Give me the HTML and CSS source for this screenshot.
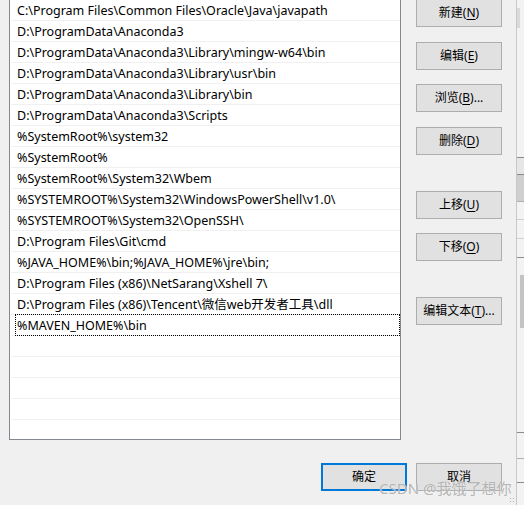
FILE: index.html
```html
<!DOCTYPE html>
<html lang="zh-CN">
<head>
<meta charset="utf-8">
<title>编辑环境变量</title>
<link rel="stylesheet" href="styles.css">
</head>
<body>
<div class="screen">
  <div class="dialog">
    <div class="main">
      <div class="list">
        <div class="row">C:\Program Files\Common Files\Oracle\Java\javapath</div>
        <div class="row">D:\ProgramData\Anaconda3</div>
        <div class="row">D:\ProgramData\Anaconda3\Library\mingw-w64\bin</div>
        <div class="row">D:\ProgramData\Anaconda3\Library\usr\bin</div>
        <div class="row">D:\ProgramData\Anaconda3\Library\bin</div>
        <div class="row">D:\ProgramData\Anaconda3\Scripts</div>
        <div class="row">%SystemRoot%\system32</div>
        <div class="row">%SystemRoot%</div>
        <div class="row">%SystemRoot%\System32\Wbem</div>
        <div class="row">%SYSTEMROOT%\System32\WindowsPowerShell\v1.0\</div>
        <div class="row">%SYSTEMROOT%\System32\OpenSSH\</div>
        <div class="row">D:\Program Files\Git\cmd</div>
        <div class="row">%JAVA_HOME%\bin;%JAVA_HOME%\jre\bin;</div>
        <div class="row">D:\Program Files (x86)\NetSarang\Xshell 7\</div>
        <div class="row">D:\Program Files (x86)\Tencent\微信web开发者工具\dll</div>
        <div class="row focused">%MAVEN_HOME%\bin</div>
        <div class="row"></div>
        <div class="row"></div>
        <div class="row"></div>
        <div class="row"></div>
        <div class="row"></div>
      </div>
      <div class="side">
        <button class="btn b-first">新建(<u>N</u>)</button>
        <button class="btn b-15">编辑(<u>E</u>)</button>
        <button class="btn b-14">浏览(<u>B</u>)...</button>
        <button class="btn b-15">删除(<u>D</u>)</button>
        <button class="btn b-36">上移(<u>U</u>)</button>
        <button class="btn b-14">下移(<u>O</u>)</button>
        <button class="btn b-36">编辑文本(<u>T</u>)...</button>
      </div>
    </div>
    <div class="footer">
      <button class="btn ok">确定</button>
      <button class="btn">取消</button>
    </div>
  </div>
  <div class="backwin">
    <div class="bw-thumb t1"></div>
    <div class="bw-thumb t2"></div>
    <div class="bw-sp s1"></div>
    <div class="bw-line dark"></div>
    <div class="bw-fill f1"></div>
    <div class="bw-line dark"></div>
    <div class="bw-fill f2"></div>
    <div class="bw-line"></div>
    <div class="bw-sp s2"></div>
    <div class="bw-line light"></div>
    <div class="bw-sp s3"></div>
    <div class="bw-line light"></div>
    <div class="bw-sp s4"></div>
    <div class="bw-line dark"></div>
    <div class="bw-sp s5"></div>
    <div class="bw-line dark"></div>
    <div class="bw-sp s6"></div>
    <div class="bw-line"></div>
    <div class="bw-sp s7"></div>
    <div class="bw-line dark"></div>
  </div>
  <div class="watermark">CSDN @我饿了想你</div>
  <div class="grip"></div>
</div>
</body>
</html>
```

FILE: styles.css
```css
html, body {
  margin: 0;
  padding: 0;
}
body {
  background: #f0f0f0;
  font-family: "Noto Sans", "Noto Sans CJK SC", sans-serif;
  font-size: 12.5px;
  color: #000;
}
.screen {
  position: relative;
  width: 524px;
  height: 505px;
  overflow: hidden;
  display: flex;
}
.dialog {
  width: 516px;
  flex: none;
  display: flex;
  flex-direction: column;
}
.main {
  display: flex;
  padding-left: 9px;
  gap: 15px;
}
.list {
  box-sizing: border-box;
  width: 392px;
  height: 440px;
  background: #fff;
  border: 1px solid #828790;
  border-top: none;
  padding-left: 1px;
  overflow: hidden;
}
.row {
  position: relative;
  height: 20px;
  line-height: 21px;
  border-bottom: 1px solid #f0f0f0;
  padding-left: 6px;
  white-space: nowrap;
}
.row.focused::after {
  content: "";
  position: absolute;
  left: 4px;
  right: 0;
  top: -1px;
  bottom: -1px;
  border: 1px dotted #000;
}
.side {
  display: flex;
  flex-direction: column;
  width: 86px;
}
.btn {
  box-sizing: border-box;
  width: 86px;
  height: 28px;
  margin: 0;
  padding: 0;
  border: 1px solid #adadad;
  background: #e1e1e1;
  font-family: "Noto Sans", "Noto Sans CJK SC", sans-serif;
  font-size: 12px;
  color: #000;
  line-height: 24px;
}
.btn u {
  text-underline-offset: 2px;
}
.b-first { margin-top: -1px; }
.b-14 { margin-top: 14px; }
.b-15 { margin-top: 15px; }
.b-36 { margin-top: 36px; }
.footer {
  display: flex;
  justify-content: flex-end;
  gap: 9px;
  padding-right: 14px;
  margin-top: 23px;
}
.btn.ok {
  border: 2px solid #0078d7;
}
.backwin {
  flex: 1;
  border-left: 1px solid #c8c8c8;
  background: #f3f3f3;
  display: flex;
  flex-direction: column;
  position: relative;
}
.bw-thumb {
  position: absolute;
}
.bw-thumb.t1 {
  left: 0;
  top: 8px;
  width: 3px;
  height: 20px;
  background: #dadada;
}
.bw-thumb.t2 {
  left: 3px;
  top: 275px;
  width: 4px;
  height: 53px;
  background: #c4c4c4;
}
.bw-sp.s1 { height: 157px; }
.bw-line { height: 1px; background: #b0b0b0; }
.bw-line.dark { background: #8a8a8a; }
.bw-line.light { background: #d0d0d0; }
.bw-fill.f1 { height: 16px; background: #e6e6e6; }
.bw-fill.f2 { height: 26px; background: #cfcfcf; }
.bw-sp.s2 { height: 17px; }
.bw-sp.s3 { height: 18px; }
.bw-sp.s4 { height: 18px; }
.bw-sp.s5 { height: 174px; }
.bw-sp.s6 { height: 25px; }
.bw-sp.s7 { height: 23px; }
.watermark {
  position: absolute;
  left: 379px;
  top: 478px;
  font-family: "Noto Sans", "Noto Sans CJK SC", sans-serif;
  font-size: 15px;
  line-height: 20px;
  color: rgba(170, 170, 170, 0.9);
  text-shadow: 0 0 1px rgba(255, 255, 255, 0.9);
  white-space: nowrap;
}
.grip {
  position: absolute;
  left: 509px;
  top: 497px;
  width: 7px;
  height: 7px;
  background-image: radial-gradient(circle, #b4b4b4 0.8px, transparent 1px);
  background-size: 3px 3px;
}
```
